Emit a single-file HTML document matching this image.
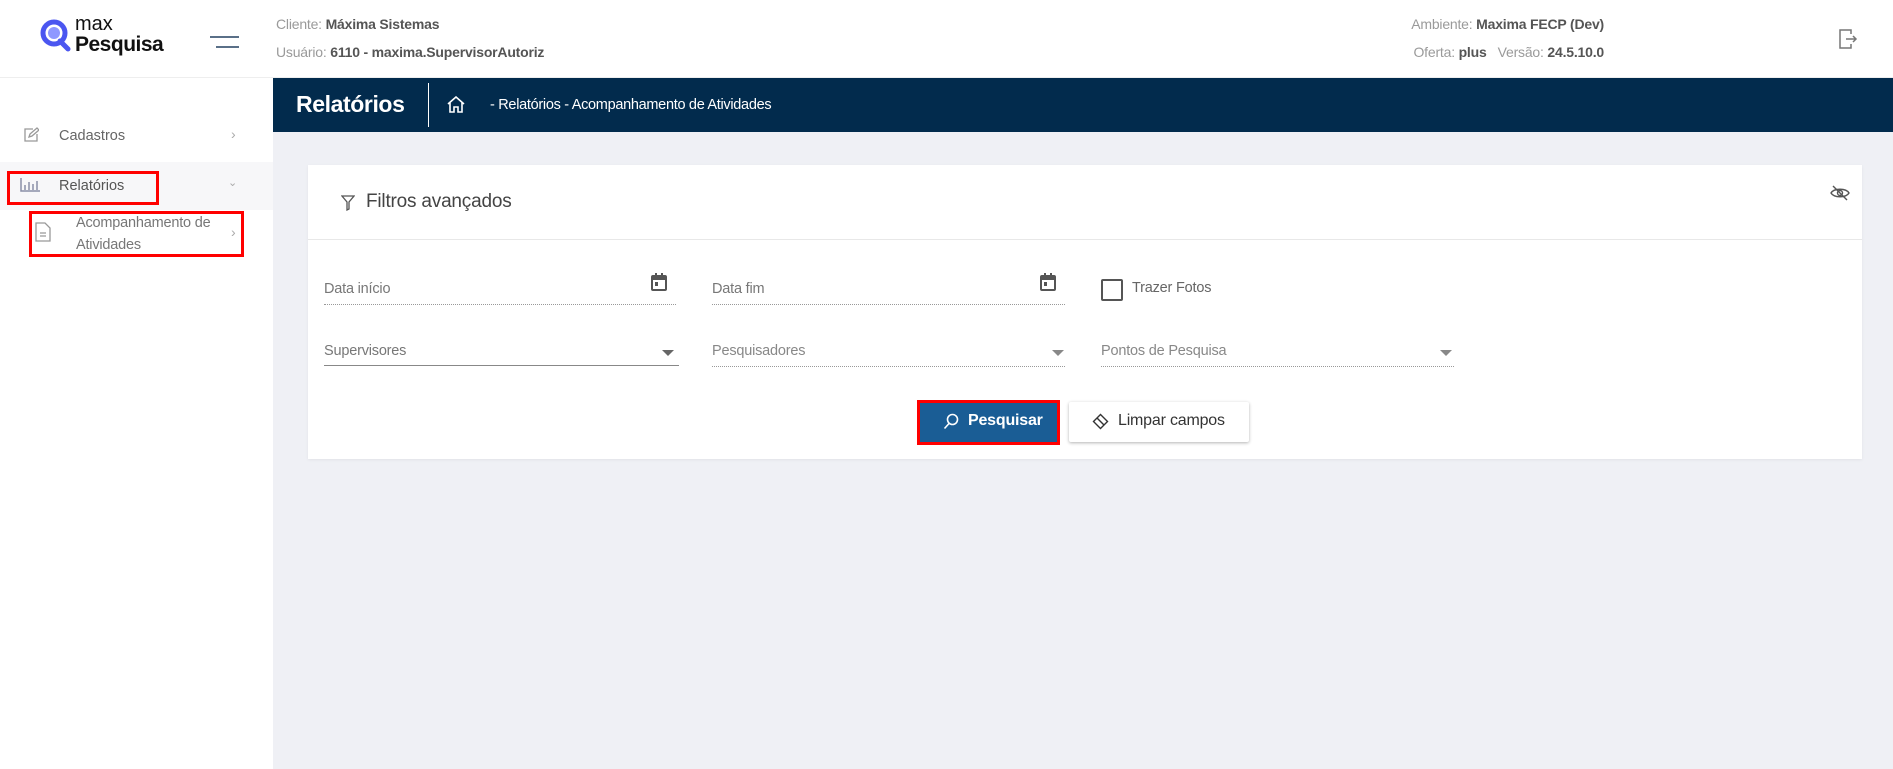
<!DOCTYPE html>
<html><head><meta charset="utf-8"><style>
*{box-sizing:border-box;margin:0;padding:0}
body{width:1893px;height:769px;overflow:hidden;background:#eff0f5;font-family:"Liberation Sans",sans-serif;position:relative;color:#333}
.a{position:absolute}
.hdr{left:0;top:0;width:1893px;height:78px;background:#fff;border-bottom:1px solid #eee}
.side{left:0;top:78px;width:273px;height:691px;background:#fff}
.nav{left:273px;top:78px;width:1620px;height:54px;background:#022b4d}
.gray{color:#9a9a9a;font-size:14px;letter-spacing:-0.2px}
.gray b{color:#555}
.card{left:308px;top:165px;width:1554px;height:294px;background:#fff;box-shadow:0 1px 3px rgba(0,0,0,.06)}
.lbl{font-size:14.5px;color:#777;letter-spacing:-0.2px}
.dot{height:0;border-bottom:1px dotted #999}
.arrow{width:0;height:0;border-left:6px solid transparent;border-right:6px solid transparent;border-top:6px solid #666}
</style></head><body>
<div class="a hdr"></div>
<svg class="a" style="left:40px;top:18px" width="32" height="36" viewBox="0 0 32 36"><circle cx="14" cy="15" r="11" fill="none" stroke="#4b56f0" stroke-width="5"/><circle cx="14" cy="15" r="6" fill="#8f98ff"/><path d="M20 23 L28 31" stroke="#4b56f0" stroke-width="5" stroke-linecap="round"/></svg>
<div class="a" style="left:75px;top:14px;font-size:20px;color:#111;line-height:20px">max</div>
<div class="a" style="left:75px;top:34px;font-size:21px;font-weight:bold;color:#111;line-height:22px;letter-spacing:-0.5px">Pesquisa</div>
<div class="a" style="left:210px;top:36px;width:29px;height:2px;background:#5a7088"></div>
<div class="a" style="left:216px;top:46px;width:23px;height:2px;background:#5a7088"></div>
<div class="a gray" style="left:276px;top:16px">Cliente: <b>Máxima Sistemas</b></div>
<div class="a gray" style="left:276px;top:44px">Usuário: <b>6110 - maxima.SupervisorAutoriz</b></div>
<div class="a gray" style="left:1363px;top:16px;width:241px;text-align:right">Ambiente: <b>Maxima FECP (Dev)</b></div>
<div class="a gray" style="left:1363px;top:44px;width:241px;text-align:right">Oferta: <b>plus</b> &nbsp; Versão: <b>24.5.10.0</b></div>
<svg class="a" style="left:1838px;top:28px" width="20" height="22" viewBox="0 0 20 22" fill="none" stroke="#777" stroke-width="1.5"><path d="M13 6V2H2v18h11v-4"/><path d="M8 11h10M15 8l3 3-3 3"/></svg>
<div class="a side"></div>
<svg class="a" style="left:23px;top:127px" width="16" height="16" viewBox="0 0 16 16" fill="none" stroke="#999" stroke-width="1.3"><path d="M10 2H2v12h12V7"/><path d="M6 10l1-3 7-6 2 2-7 6z"/></svg>
<div class="a" style="left:59px;top:128px;font-size:14.5px;color:#666">Cadastros</div>
<div class="a" style="left:231px;top:126px;font-size:14px;color:#aaa">›</div>
<div class="a" style="left:0;top:162px;width:273px;height:48px;background:#f7f7f9"></div>
<svg class="a" style="left:20px;top:178px" width="20" height="14" viewBox="0 0 20 14" fill="none" stroke="#8a8fa8" stroke-width="1.5"><path d="M1 0v13h19M5 7v5M9 4v8M13 6v6M17 3v9"/></svg>
<div class="a" style="left:59px;top:178px;font-size:14.5px;color:#555">Relatórios</div>
<div class="a" style="left:228px;top:176px;font-size:11px;color:#aaa">⌄</div>
<div class="a" style="left:7px;top:171px;width:152px;height:34px;border:3px solid #f00"></div>
<svg class="a" style="left:35px;top:222px" width="16" height="20" viewBox="0 0 16 20" fill="none" stroke="#999" stroke-width="1.3"><path d="M1 1h9l5 5v13H1z"/><path d="M5 11h6M5 14h6"/></svg>
<div class="a" style="left:76px;top:212px;font-size:14.5px;color:#777;line-height:22px;letter-spacing:-0.2px">Acompanhamento de<br>Atividades</div>
<div class="a" style="left:231px;top:224px;font-size:14px;color:#aaa">›</div>
<div class="a" style="left:29px;top:211px;width:215px;height:46px;border:3px solid #f00"></div>
<div class="a nav"></div>
<div class="a" style="left:296px;top:91px;font-size:23px;font-weight:bold;color:#fff;letter-spacing:-0.4px">Relatórios</div>
<div class="a" style="left:428px;top:83px;width:1px;height:44px;background:#fff"></div>
<svg class="a" style="left:447px;top:96px" width="18" height="17" viewBox="0 0 18 17" fill="none" stroke="#fff" stroke-width="1.6"><path d="M1 8L9 1l8 7M3 6v10h4v-5h4v5h4V6"/></svg>
<div class="a" style="left:490px;top:97px;font-size:14.5px;color:#fff;letter-spacing:-0.3px">- Relatórios - Acompanhamento de Atividades</div>
<div class="a card"></div>
<svg class="a" style="left:341px;top:195px" width="14" height="16" viewBox="0 0 14 16" fill="none" stroke="#555" stroke-width="1.3"><path d="M1 1h12L8 7v7L6 15V7z"/></svg>
<div class="a" style="left:366px;top:191px;font-size:19px;color:#444;letter-spacing:-0.2px">Filtros avançados</div>
<svg class="a" style="left:1830px;top:185px" width="20" height="16" viewBox="0 0 20 16" fill="none" stroke="#555" stroke-width="1.4"><path d="M1 8c3-5 15-5 18 0-3 5-15 5-18 0z"/><circle cx="10" cy="8" r="2.5"/><path d="M3 1l14 14"/></svg>
<div class="a" style="left:308px;top:239px;width:1554px;height:1px;background:#e8e8e8"></div>
<div class="a lbl" style="left:324px;top:281px">Data início</div>
<div class="a dot" style="left:324px;top:304px;width:352px"></div>
<svg class="a" style="left:651px;top:273px" width="16" height="18" viewBox="0 0 16 18"><rect x="1" y="3" width="14" height="14" rx="1" fill="none" stroke="#555" stroke-width="2"/><rect x="1" y="3" width="14" height="4" fill="#555"/><rect x="4" y="0" width="2" height="4" fill="#555"/><rect x="10" y="0" width="2" height="4" fill="#555"/><rect x="4" y="9" width="3" height="4" fill="#555"/></svg>
<div class="a lbl" style="left:712px;top:281px">Data fim</div>
<div class="a dot" style="left:712px;top:304px;width:353px"></div>
<svg class="a" style="left:1040px;top:273px" width="16" height="18" viewBox="0 0 16 18"><rect x="1" y="3" width="14" height="14" rx="1" fill="none" stroke="#555" stroke-width="2"/><rect x="1" y="3" width="14" height="4" fill="#555"/><rect x="4" y="0" width="2" height="4" fill="#555"/><rect x="10" y="0" width="2" height="4" fill="#555"/><rect x="4" y="9" width="3" height="4" fill="#555"/></svg>
<div class="a" style="left:1101px;top:279px;width:22px;height:22px;border:2px solid #555;border-radius:2px"></div>
<div class="a lbl" style="left:1132px;top:280px;color:#666">Trazer Fotos</div>
<div class="a lbl" style="left:324px;top:343px">Supervisores</div>
<div class="a" style="left:324px;top:365px;width:355px;height:1px;background:#888"></div>
<div class="a arrow" style="left:662px;top:350px"></div>
<div class="a lbl" style="left:712px;top:343px;color:#888">Pesquisadores</div>
<div class="a dot" style="left:712px;top:366px;width:353px"></div>
<div class="a arrow" style="left:1052px;top:350px;border-top-color:#888"></div>
<div class="a lbl" style="left:1101px;top:343px;color:#888">Pontos de Pesquisa</div>
<div class="a dot" style="left:1101px;top:366px;width:353px"></div>
<div class="a arrow" style="left:1440px;top:350px;border-top-color:#888"></div>
<div class="a" style="left:917px;top:400px;width:143px;height:45px;background:#1a5d95;border:3px solid #f00"></div>
<svg class="a" style="left:943px;top:413px" width="16" height="17" viewBox="0 0 16 17" fill="none" stroke="#fff" stroke-width="1.6"><circle cx="9.5" cy="6.5" r="5"/><path d="M6 10.5L1.5 15.5"/></svg>
<div class="a" style="left:968px;top:412px;font-size:16px;font-weight:bold;color:#fff;letter-spacing:-0.2px">Pesquisar</div>
<div class="a" style="left:1069px;top:402px;width:180px;height:40px;background:#fff;box-shadow:0 1px 3px rgba(0,0,0,.3);border-radius:2px"></div>
<svg class="a" style="left:1092px;top:413px" width="17" height="17" viewBox="0 0 17 17" fill="none" stroke="#333" stroke-width="1.4"><path d="M8.5 1.5l7 7-7 7-7-7z"/><path d="M5 5l7 7"/></svg>
<div class="a" style="left:1118px;top:412px;font-size:16px;color:#333;letter-spacing:-0.2px">Limpar campos</div>
</body></html>
